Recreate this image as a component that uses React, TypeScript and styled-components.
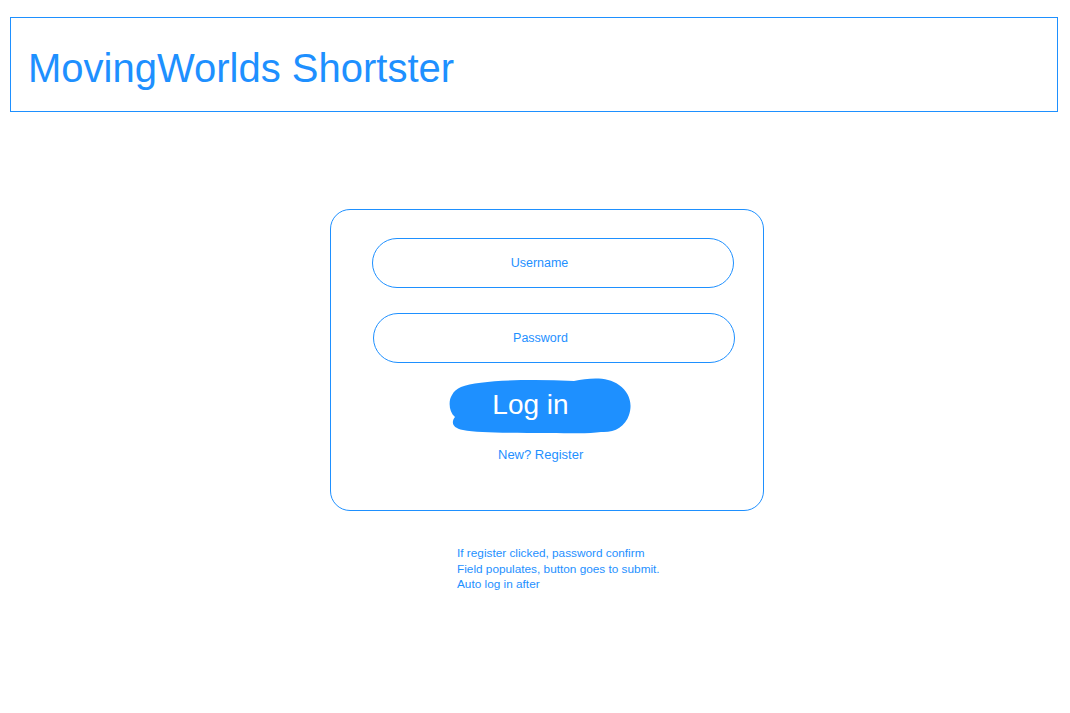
import React from 'react';
import styled, { createGlobalStyle } from 'styled-components';

const blue = '#1e90ff';

const GlobalStyle = createGlobalStyle`
    html, body {
        margin: 0;
        padding: 0;
        background: #fff;
        font-family: "Liberation Sans", Arial, sans-serif;
        color: ${blue};
    }
`;

const Page = styled.div`
    width: 1070px;
    min-height: 713px;
`;

const Header = styled.header`
    box-sizing: border-box;
    margin: 17px 0 0 10px;
    width: 1048px;
    height: 95px;
    border: 1px solid ${blue};
    display: flex;
    align-items: center;
    padding: 8px 0 0 17px;
`;

const Title = styled.h1`
    margin: 0;
    font-size: 40px;
    font-weight: normal;
    color: ${blue};
`;

const Card = styled.form`
    box-sizing: border-box;
    margin: 97px 0 0 330px;
    width: 434px;
    height: 302px;
    border: 1px solid ${blue};
    border-radius: 20px;
    padding: 28px 0 0 41px;
    display: flex;
    flex-direction: column;
    align-items: flex-start;
`;

const Field = styled.input<{ $shift?: number }>`
    box-sizing: border-box;
    width: 362px;
    height: 50px;
    margin: 0 0 0 ${({ $shift }) => $shift ?? 0}px;
    border: 1px solid ${blue};
    border-radius: 25px;
    background: #fff;
    padding: 0 27px 1px 0;
    text-align: center;
    font-family: inherit;
    font-size: 12.5px;
    color: ${blue};
    outline: none;

    &::placeholder {
        color: ${blue};
        opacity: 1;
    }

    & + & {
        margin-top: 25px;
    }
`;

const LoginButton = styled.button`
    position: relative;
    margin: 14px 0 0 77px;
    width: 183px;
    height: 58px;
    padding: 0 0 3px 0;
    border: none;
    background: none;
    cursor: pointer;
    font-family: inherit;
    font-size: 28px;
    color: #fff;

    svg {
        position: absolute;
        inset: 0;
    }

    span {
        position: relative;
        margin-left: -20px;
    }
`;

const RegisterLink = styled.a`
    margin: 12px 0 0 126px;
    font-size: 13px;
    color: ${blue};
    text-decoration: none;
    cursor: pointer;
`;

const Notes = styled.p`
    margin: 35px 0 0 457px;
    font-size: 11.8px;
    line-height: 15.5px;
    color: ${blue};
`;

// hand-drawn highlighter stroke behind the login label
const Blob = () => (
    <svg width="183" height="58" viewBox="0 0 183 58">
        <path
            fill={blue}
            d="M12 10 C30 3 80 2 125 4 C140 1 158 -1 170 8 C180 15 184 26 180 38 C176 50 165 56 152 55 C140 57 120 56 100 56 C60 56 30 56 14 53 C3 51 2 45 6 40 C0 35 -1 24 3 18 C5 14 8 12 12 10 Z"
        />
    </svg>
);

export default function App() {
    return (
        <Page>
            <GlobalStyle />
            <Header>
                <Title>MovingWorlds Shortster</Title>
            </Header>
            <Card onSubmit={(e) => e.preventDefault()}>
                <Field placeholder="Username" />
                <Field type="password" placeholder="Password" $shift={1} />
                <LoginButton type="submit">
                    <Blob />
                    <span>Log in</span>
                </LoginButton>
                <RegisterLink>New? Register</RegisterLink>
            </Card>
            <Notes>
                If register clicked, password confirm
                <br />
                Field populates, button goes to submit.
                <br />
                Auto log in after
            </Notes>
        </Page>
    );
}
